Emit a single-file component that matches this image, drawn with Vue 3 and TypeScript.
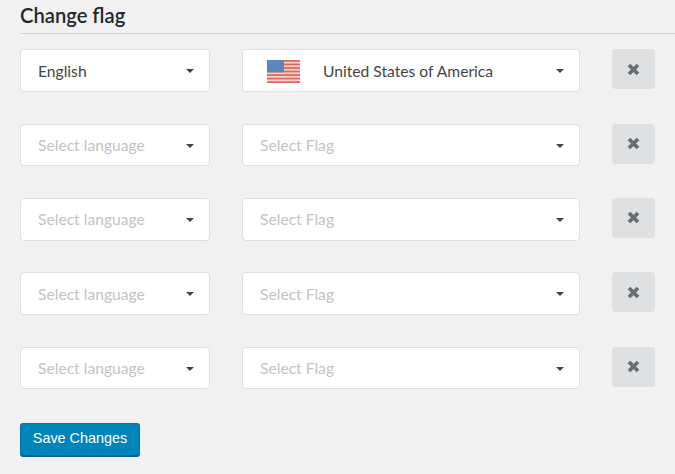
<script setup lang="ts">
interface Row { lang: string; flag: string; hasFlag: boolean }
const rows: Row[] = [
  { lang: 'English', flag: 'United States of America', hasFlag: true },
  { lang: '', flag: '', hasFlag: false },
  { lang: '', flag: '', hasFlag: false },
  { lang: '', flag: '', hasFlag: false },
  { lang: '', flag: '', hasFlag: false },
]
const stripes = [0, 2, 4, 6, 8, 10, 12]
</script>

<template>
  <div class="page">
    <h2 class="title">Change flag</h2>
    <div class="rows">
      <div v-for="(row, i) in rows" :key="i" class="row">
        <div class="select lang">
          <span v-if="row.lang" class="value">{{ row.lang }}</span>
          <span v-else class="placeholder">Select language</span>
          <span class="caret"></span>
        </div>
        <div class="select flag">
          <template v-if="row.hasFlag">
            <svg class="us" width="33" height="23" viewBox="0 0 33 23">
              <rect width="33" height="23" fill="#f1d3cf" />
              <rect v-for="s in stripes" :key="s" x="0" :y="s * 1.77" width="33" height="1.77" fill="#dc6a5e" />
              <rect x="0" y="0" width="17" height="12.4" fill="#5b87bd" />
            </svg>
            <span class="value">{{ row.flag }}</span>
          </template>
          <span v-else class="placeholder">Select Flag</span>
          <span class="caret"></span>
        </div>
        <button class="remove" type="button" aria-label="Remove">
          <svg width="15" height="15" viewBox="0 0 15 15">
            <path d="M3 3 L12 12 M12 3 L3 12" stroke="#6b6d70" stroke-width="3.8" fill="none" />
          </svg>
        </button>
      </div>
    </div>
    <button class="save" type="button">Save Changes</button>
  </div>
</template>

<style>
html, body { margin: 0; background: #f1f1f1; }
</style>

<style scoped>
.page {
  width: 675px;
  height: 474px;
  box-sizing: border-box;
  padding-left: 20px;
  overflow: hidden;
  background: #f1f1f1;
  font-family: Lato, sans-serif;
}
.title {
  margin: 0;
  height: 34px;
  box-sizing: border-box;
  padding-top: 3px;
  border-bottom: 1px solid #d5d5d5;
  font-size: 20.2px;
  line-height: 24px;
  font-weight: 600;
  color: #23282d;
}
.rows {
  display: flex;
  flex-direction: column;
  gap: 31.6px;
  margin-top: 15.4px;
}
.row {
  display: flex;
  align-items: flex-start;
  height: 42.7px;
}
.select {
  display: flex;
  align-items: center;
  position: relative;
  height: 42.7px;
  box-sizing: border-box;
  background: #fff;
  border: 1px solid #dfdfdf;
  border-radius: 4px;
  padding-left: 17px;
  font-size: 15.65px;
}
.lang { width: 190px; }
.flag { width: 338px; margin-left: 32px; }
.value { color: #444; }
.placeholder { color: #c4c4c4; }
.us { margin-left: 7px; margin-right: 23px; flex: none; position: relative; top: 1px; }
.caret {
  position: absolute;
  right: 15px;
  top: 19px;
  width: 0;
  height: 0;
  border-left: 4.5px solid transparent;
  border-right: 4.5px solid transparent;
  border-top: 4.5px solid #444;
}
.remove {
  width: 43px;
  height: 40px;
  margin-left: 32px;
  padding: 0;
  border: none;
  border-radius: 4px;
  background: #dfe0e2;
  display: flex;
  align-items: center;
  justify-content: center;
}
.save {
  display: block;
  margin-top: 33.7px;
  width: 120px;
  height: 34px;
  padding: 0 0 3px;
  box-sizing: border-box;
  background: #0085ba;
  border: 1px solid #0073aa;
  border-bottom: 2px solid #006799;
  border-radius: 3px;
  color: #fff;
  font-family: "Liberation Sans", Arial, sans-serif;
  font-size: 14.4px;
}
</style>
